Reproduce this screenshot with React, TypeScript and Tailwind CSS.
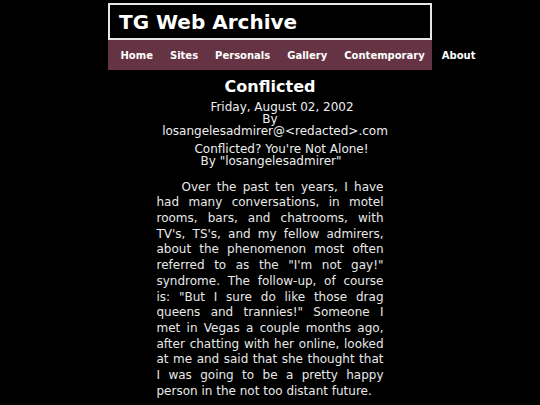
import React from "react";

export default function App() {
  const nav = ["Home", "Sites", "Personals", "Gallery", "Contemporary", "About"];
  return (
    <div className="min-h-[405px] w-full bg-black text-white overflow-hidden" style={{ fontFamily: '"DejaVu Sans", Verdana, sans-serif' }}>
      <div className="w-[324px] mx-auto pt-[3px]">
        <div className="h-[37px] border-2 border-[#e6e6e6] bg-black flex items-center pl-[9px]">
          <span className="text-[20px] font-bold leading-none text-white">TG Web Archive</span>
        </div>
        <div className="h-[30px] bg-[#663344] flex items-center pl-[4px] pt-[2px] whitespace-nowrap">
          {nav.map((n) => (
            <span key={n} className="px-[8.5px] text-[10px] font-bold text-white leading-none">{n}</span>
          ))}
        </div>
        <div className="mt-[6.5px] text-center text-[16px] leading-[20px] font-bold text-white">Conflicted</div>
        <div className="mt-[4.3px] text-center text-[12px] leading-[12px] text-[#eeeeee]">
          <div className="pl-[24px]">Friday, August 02, 2002</div>
          <div>By</div>
          <div className="pl-[10px]">losangelesadmirer@&lt;redacted&gt;.com</div>
        </div>
        <div className="mt-[6.5px] text-center text-[12px] leading-[12px] text-[#eeeeee]">
          <div className="pl-[23px]">Conflicted? You're Not Alone!</div>
          <div className="pl-[2px]">By "losangelesadmirer"</div>
        </div>
        <p className="w-[227px] mx-auto mt-[12.3px] text-[12px] leading-[15.7px] text-justify indent-[25px] text-[#e8e8e8]">
          Over the past ten years, I have had many conversations, in motel rooms, bars, and chatrooms, with TV's, TS's, and my fellow admirers, about the phenomenon most often referred to as the "I'm not gay!" syndrome. The follow-up, of course is: "But I sure do like those drag queens and trannies!" Someone I met in Vegas a couple months ago, after chatting with her online, looked at me and said that she thought that I was going to be a pretty happy person in the not too distant future.
        </p>
      </div>
    </div>
  );
}
